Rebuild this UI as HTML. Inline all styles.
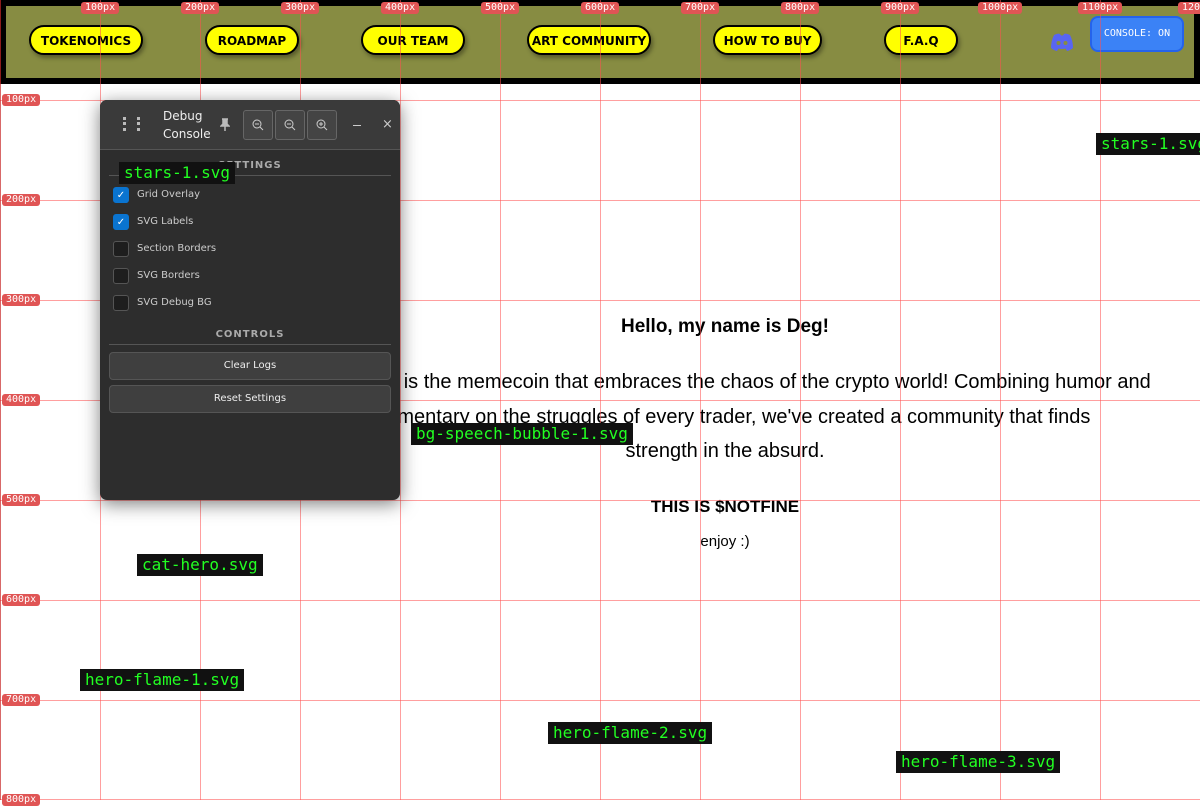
<!DOCTYPE html>
<html><head><meta charset="utf-8"><style>
*{box-sizing:border-box;margin:0;padding:0}
body{width:1200px;height:800px;background:#fff;position:relative;overflow:hidden;font-family:"Liberation Sans",sans-serif}
.nav{position:absolute;left:0;top:0;width:1200px;height:84px;background:#000}
.navin{position:absolute;left:6px;top:6px;width:1188px;height:72px;background:#878c42}
.btn{position:absolute;top:25px;height:30px;background:#ff0;border:2px solid #000;border-radius:15px;font-weight:bold;font-size:12px;padding-top:2px;display:flex;align-items:center;justify-content:center;white-space:nowrap;box-shadow:2px 3px 4px rgba(0,0,0,.35);font-family:"DejaVu Sans",sans-serif}
.vl{position:absolute;top:0;width:1px;height:800px;background:rgba(255,80,80,.55)}
.hl{position:absolute;left:0;height:1px;width:1200px;background:rgba(255,80,80,.55)}
.gl{position:absolute;background:#e05555;color:#fff;font:10px "DejaVu Sans Mono",monospace;padding:0 4px;border-radius:3px;line-height:12px;white-space:nowrap}
.lab{position:absolute;background:#111;color:#2f2;font:16px "DejaVu Sans Mono",monospace;padding:1px 5px;line-height:20px;white-space:nowrap}
.txt{position:absolute;left:225px;width:1000px;text-align:center;white-space:nowrap;color:#000;font-family:"Comic Sans MS","Liberation Sans",sans-serif}
.panel{position:absolute;left:100px;top:100px;width:300px;height:400px;background:#2d2d2d;border-radius:7px;box-shadow:0 4px 18px rgba(0,0,0,.5);color:#ddd;font-family:"DejaVu Sans",sans-serif}
.hd{height:50px;background:#3a3a3a;border-bottom:1px solid #555;border-radius:7px 7px 0 0;position:relative}
.ib{position:absolute;top:10px;width:30px;height:30px;border:1px solid #666;border-radius:3px;background:#444}
.cb{position:absolute;left:13px;width:16px;height:16px;border:1px solid #555;border-radius:3px;background:#1e1e1e;font-size:10px;color:#fff;text-align:center;line-height:15px}
.cb.on{background:#0a74d0;border-color:#0a74d0}
.cl{position:absolute;left:37px;font-size:10px;color:#ccc}
.sec{position:absolute;left:9px;width:282px;text-align:center;font-size:10px;font-weight:bold;color:#aaa;letter-spacing:1px;border-bottom:1px solid #555;padding-bottom:4px}
.pb{position:absolute;left:9px;width:282px;height:28px;background:#3f3f3f;border:1px solid #555;border-radius:4px;font-size:10px;color:#eee;text-align:center;line-height:26px}
</style></head><body>
<div class="nav"><div class="navin"></div></div>
<div class="btn" style="left:29px;width:114px">TOKENOMICS</div>
<div class="btn" style="left:205px;width:94px">ROADMAP</div>
<div class="btn" style="left:361px;width:104px">OUR TEAM</div>
<div class="btn" style="left:527px;width:124px">ART COMMUNITY</div>
<div class="btn" style="left:713px;width:109px">HOW TO BUY</div>
<div class="btn" style="left:884px;width:74px">F.A.Q</div>
<svg style="position:absolute;left:1050px;top:33px" width="24" height="18" viewBox="0 0 24 18"><path d="M4 2 Q8 0 10 1 L11 2.5 Q12 2.3 13 2.5 L14 1 Q16 0 20 2 Q23 8 23 15 Q20 17.5 17 18 L15.5 15.5 Q12 16.5 8.5 15.5 L7 18 Q4 17.5 1 15 Q1 8 4 2Z" fill="#5865f2"/><circle cx="8.5" cy="10" r="2" fill="#878c42"/><circle cx="15.5" cy="10" r="2" fill="#878c42"/></svg>
<div style="position:absolute;left:1090px;top:16px;width:94px;height:36px;background:#3b82f6;border:2px solid #2563eb;border-radius:8px;color:#fff;font:10px 'DejaVu Sans Mono',monospace;text-align:center;line-height:32px">CONSOLE: ON</div>

<div class="txt" style="top:316px;font-size:19px;font-weight:bold">Hello, my name is Deg!</div>
<div class="txt" style="top:371px;font-size:20px">$NOTFINE is the memecoin that embraces the chaos of the crypto world! Combining humor and</div>
<div class="txt" style="top:406px;font-size:20px">commentary on the struggles of every trader, we've created a community that finds</div>
<div class="txt" style="top:440px;font-size:20px">strength in the absurd.</div>
<div class="txt" style="top:497px;font-size:17px;font-weight:bold">THIS IS $NOTFINE</div>
<div class="txt" style="top:533px;font-size:15px">enjoy :)</div>

<div class="vl" style="left:100px"></div><div class="vl" style="left:200px"></div><div class="vl" style="left:300px"></div><div class="vl" style="left:400px"></div><div class="vl" style="left:500px"></div><div class="vl" style="left:600px"></div><div class="vl" style="left:700px"></div><div class="vl" style="left:800px"></div><div class="vl" style="left:900px"></div><div class="vl" style="left:1000px"></div><div class="vl" style="left:1100px"></div>
<div class="hl" style="top:100px"></div><div class="hl" style="top:200px"></div><div class="hl" style="top:300px"></div><div class="hl" style="top:400px"></div><div class="hl" style="top:500px"></div><div class="hl" style="top:600px"></div><div class="hl" style="top:700px"></div><div class="hl" style="top:799px"></div>
<div class="vl" style="left:0;background:rgba(200,40,40,.7)"></div>

<div class="gl" style="left:81px;top:2px">100px</div><div class="gl" style="left:181px;top:2px">200px</div><div class="gl" style="left:281px;top:2px">300px</div><div class="gl" style="left:381px;top:2px">400px</div><div class="gl" style="left:481px;top:2px">500px</div><div class="gl" style="left:581px;top:2px">600px</div><div class="gl" style="left:681px;top:2px">700px</div><div class="gl" style="left:781px;top:2px">800px</div><div class="gl" style="left:881px;top:2px">900px</div><div class="gl" style="left:978px;top:2px">1000px</div><div class="gl" style="left:1078px;top:2px">1100px</div><div class="gl" style="left:1178px;top:2px">1200px</div>
<div class="gl" style="left:2px;top:94px">100px</div><div class="gl" style="left:2px;top:194px">200px</div><div class="gl" style="left:2px;top:294px">300px</div><div class="gl" style="left:2px;top:394px">400px</div><div class="gl" style="left:2px;top:494px">500px</div><div class="gl" style="left:2px;top:594px">600px</div><div class="gl" style="left:2px;top:694px">700px</div><div class="gl" style="left:2px;top:794px">800px</div>

<div class="lab" style="left:1096px;top:133px">stars-1.svg</div>
<div class="lab" style="left:411px;top:423px">bg-speech-bubble-1.svg</div>
<div class="lab" style="left:137px;top:554px">cat-hero.svg</div>
<div class="lab" style="left:80px;top:669px">hero-flame-1.svg</div>
<div class="lab" style="left:548px;top:722px">hero-flame-2.svg</div>
<div class="lab" style="left:896px;top:751px">hero-flame-3.svg</div>

<div class="panel">
<div class="hd">
<div style="position:absolute;left:23px;top:17px;width:3px;height:14px;border-left:3px dotted #bbb"></div>
<div style="position:absolute;left:37px;top:17px;width:3px;height:14px;border-left:3px dotted #bbb"></div>
<div style="position:absolute;left:63px;top:7px;font-size:12px;line-height:18px;color:#eee">Debug<br>Console</div>
<svg style="position:absolute;left:120px;top:18px" width="10" height="14" viewBox="0 0 10 14"><path d="M2 1h6M3 1v5L1 8h8L7 6V1M5 8v5" stroke="#bbb" stroke-width="1.5" fill="#bbb"/></svg>
<div class="ib" style="left:143px"></div><div class="ib" style="left:175px"></div><div class="ib" style="left:207px"></div>
<svg style="position:absolute;left:151px;top:18px" width="80" height="14"><g fill="none" stroke="#ccc" stroke-width="1"><circle cx="6" cy="6" r="4"/><path d="M9 9l3 3M4 6h4"/><circle cx="38" cy="6" r="4"/><path d="M41 9l3 3M36 6h4"/><circle cx="70" cy="6" r="4"/><path d="M73 9l3 3M68 6h4M70 4v4"/></g></svg>
<div style="position:absolute;left:253px;top:25px;width:8px;height:1px;background:#ccc"></div>
<div style="position:absolute;left:282px;top:17px;font-size:13px;color:#ccc">×</div>
</div>
<div class="sec" style="top:60px">SETTINGS</div>
<div class="cb on" style="top:87px">✓</div><div class="cl" style="top:89px">Grid Overlay</div>
<div class="cb on" style="top:114px">✓</div><div class="cl" style="top:116px">SVG Labels</div>
<div class="cb" style="top:141px"></div><div class="cl" style="top:143px">Section Borders</div>
<div class="cb" style="top:168px"></div><div class="cl" style="top:170px">SVG Borders</div>
<div class="cb" style="top:195px"></div><div class="cl" style="top:197px">SVG Debug BG</div>
<div class="sec" style="top:229px">CONTROLS</div>
<div class="pb" style="top:252px">Clear Logs</div>
<div class="pb" style="top:285px">Reset Settings</div>
</div>
<div class="lab" style="left:119px;top:162px">stars-1.svg</div>
</body></html>
